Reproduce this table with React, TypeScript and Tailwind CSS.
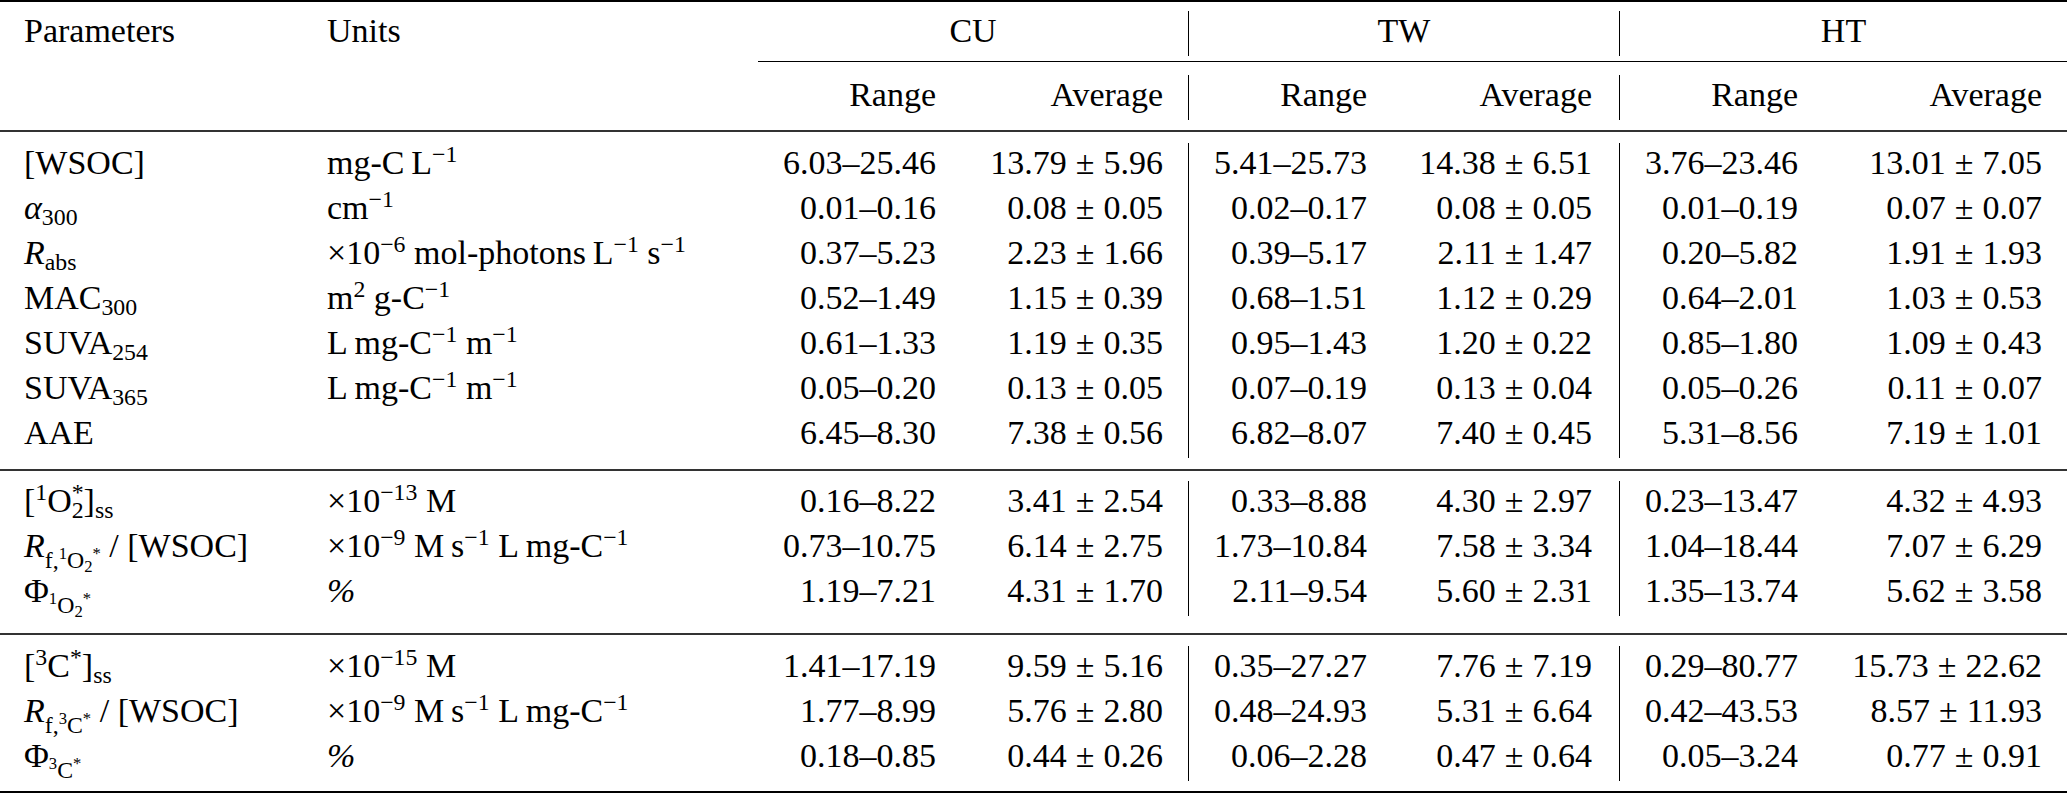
import type { ReactNode } from "react"

const grid = "grid grid-cols-[304px_454px_203px_227px_204px_227px_204px_244px]"

// cell classes for the six numeric columns (CU, TW, HT: range / average)
const numCell = [
  "h-[45px] pr-[25px] text-right",
  "h-[45px] pr-[25px] text-right",
  "h-[45px] pr-[25px] text-right border-l border-black",
  "h-[45px] pr-[27px] text-right",
  "h-[45px] pr-[25px] text-right border-l border-black",
  "h-[45px] pr-[25px] text-right",
]

function Sup({ children }: { children: ReactNode }) {
  return <sup className="text-[0.7em]">{children}</sup>
}

function Sub({ children, deep }: { children: ReactNode; deep?: boolean }) {
  return <sub className={deep ? "text-[0.7em] bottom-[-0.45em]" : "text-[0.7em]"}>{children}</sub>
}

function Avg({ v }: { v: string }) {
  const [m, s] = v.split("±")
  return (
    <>
      {m}
      <span className="mx-[9px]">±</span>
      {s}
    </>
  )
}

type Row = { p: ReactNode; u: ReactNode; v: string[] }

const perM = (
  <>
    ×10<Sup>−9</Sup> M{"\u2009"}s<Sup>−1</Sup> L{"\u2009"}mg-C<Sup>−1</Sup>
  </>
)

const sections: Row[][] = [
  [
    {
      p: "[WSOC]",
      u: (
        <>
          mg-C{"\u2009"}L<Sup>−1</Sup>
        </>
      ),
      v: ["6.03–25.46", "13.79±5.96", "5.41–25.73", "14.38±6.51", "3.76–23.46", "13.01±7.05"],
    },
    {
      p: (
        <>
          <i>α</i>
          <Sub>300</Sub>
        </>
      ),
      u: (
        <>
          cm<Sup>−1</Sup>
        </>
      ),
      v: ["0.01–0.16", "0.08±0.05", "0.02–0.17", "0.08±0.05", "0.01–0.19", "0.07±0.07"],
    },
    {
      p: (
        <>
          <i>R</i>
          <Sub>abs</Sub>
        </>
      ),
      u: (
        <>
          ×10<Sup>−6</Sup> mol-photons{"\u2009"}L<Sup>−1</Sup> s<Sup>−1</Sup>
        </>
      ),
      v: ["0.37–5.23", "2.23±1.66", "0.39–5.17", "2.11±1.47", "0.20–5.82", "1.91±1.93"],
    },
    {
      p: (
        <>
          MAC<Sub>300</Sub>
        </>
      ),
      u: (
        <>
          m<Sup>2</Sup> g-C<Sup>−1</Sup>
        </>
      ),
      v: ["0.52–1.49", "1.15±0.39", "0.68–1.51", "1.12±0.29", "0.64–2.01", "1.03±0.53"],
    },
    {
      p: (
        <>
          SUVA<Sub>254</Sub>
        </>
      ),
      u: (
        <>
          L{"\u2009"}mg-C<Sup>−1</Sup> m<Sup>−1</Sup>
        </>
      ),
      v: ["0.61–1.33", "1.19±0.35", "0.95–1.43", "1.20±0.22", "0.85–1.80", "1.09±0.43"],
    },
    {
      p: (
        <>
          SUVA<Sub>365</Sub>
        </>
      ),
      u: (
        <>
          L{"\u2009"}mg-C<Sup>−1</Sup> m<Sup>−1</Sup>
        </>
      ),
      v: ["0.05–0.20", "0.13±0.05", "0.07–0.19", "0.13±0.04", "0.05–0.26", "0.11±0.07"],
    },
    {
      p: "AAE",
      u: "",
      v: ["6.45–8.30", "7.38±0.56", "6.82–8.07", "7.40±0.45", "5.31–8.56", "7.19±1.01"],
    },
  ],
  [
    {
      p: (
        <>
          [<Sup>1</Sup>O<Sup>*</Sup>
          <sub className="ml-[-12px] text-[0.7em]">2</sub>]<Sub>ss</Sub>
        </>
      ),
      u: (
        <>
          ×10<Sup>−13</Sup> M
        </>
      ),
      v: ["0.16–8.22", "3.41±2.54", "0.33–8.88", "4.30±2.97", "0.23–13.47", "4.32±4.93"],
    },
    {
      p: (
        <>
          <i>R</i>
          <Sub deep>
            f,<Sup>1</Sup>O<Sub>2</Sub>
            <Sup>*</Sup>
          </Sub>{" "}
          / [WSOC]
        </>
      ),
      u: perM,
      v: ["0.73–10.75", "6.14±2.75", "1.73–10.84", "7.58±3.34", "1.04–18.44", "7.07±6.29"],
    },
    {
      p: (
        <>
          Φ
          <Sub deep>
            <Sup>1</Sup>O<Sub>2</Sub>
            <Sup>*</Sup>
          </Sub>
        </>
      ),
      u: <i>%</i>,
      v: ["1.19–7.21", "4.31±1.70", "2.11–9.54", "5.60±2.31", "1.35–13.74", "5.62±3.58"],
    },
  ],
  [
    {
      p: (
        <>
          [<Sup>3</Sup>C<Sup>*</Sup>]<Sub>ss</Sub>
        </>
      ),
      u: (
        <>
          ×10<Sup>−15</Sup> M
        </>
      ),
      v: ["1.41–17.19", "9.59±5.16", "0.35–27.27", "7.76±7.19", "0.29–80.77", "15.73±22.62"],
    },
    {
      p: (
        <>
          <i>R</i>
          <Sub deep>
            f,<Sup>3</Sup>C<Sup>*</Sup>
          </Sub>{" "}
          / [WSOC]
        </>
      ),
      u: perM,
      v: ["1.77–8.99", "5.76±2.80", "0.48–24.93", "5.31±6.64", "0.42–43.53", "8.57±11.93"],
    },
    {
      p: (
        <>
          Φ
          <Sub deep>
            <Sup>3</Sup>C<Sup>*</Sup>
          </Sub>
        </>
      ),
      u: <i>%</i>,
      v: ["0.18–0.85", "0.44±0.26", "0.06–2.28", "0.47±0.64", "0.05–3.24", "0.77±0.91"],
    },
  ],
]

// space above each section and below its midrule
const sectionGap = ["mt-[11px]", "mt-[10px]", "mt-[11px]"]
const ruleGap = ["mt-[11px]", "mt-[17px]", "mt-[10px]"]

function DataRow({ row }: { row: Row }) {
  return (
    <div className={grid}>
      <div className="h-[45px] pl-[24px] whitespace-nowrap">{row.p}</div>
      <div className="h-[45px] pl-[23px] whitespace-nowrap">{row.u}</div>
      {row.v.map((v, i) => (
        <div key={i} className={numCell[i] + " whitespace-nowrap"}>
          {i % 2 ? <Avg v={v} /> : v}
        </div>
      ))}
    </div>
  )
}

export default function App() {
  return (
    <div className="w-[2067px] min-h-[795px] bg-white text-black text-[34px] leading-[40px] font-['Liberation_Serif','Times_New_Roman',serif]">
      <div className="h-[2px] bg-black" />

      <div className={grid + " mt-[9px]"}>
        <div className="h-[45px] pl-[24px]">Parameters</div>
        <div className="h-[45px] pl-[23px]">Units</div>
        <div className="col-span-2 h-[45px] text-center">CU</div>
        <div className="col-span-2 h-[45px] text-center border-l border-black">TW</div>
        <div className="col-span-2 h-[45px] text-center border-l border-black">HT</div>
      </div>

      <div className={grid + " mt-[5px]"}>
        <div className="col-start-3 col-span-6 h-px bg-black" />
      </div>

      <div className={grid + " mt-[13px]"}>
        <div className="h-[45px]" />
        <div className="h-[45px]" />
        {["Range", "Average", "Range", "Average", "Range", "Average"].map((t, i) => (
          <div key={i} className={numCell[i]}>
            {t}
          </div>
        ))}
      </div>

      <div className="mt-[10px] h-[2px] bg-[#333]" />

      {sections.map((rows, s) => (
        <div key={s}>
          <div className={sectionGap[s]}>
            {rows.map((r, i) => (
              <DataRow key={i} row={r} />
            ))}
          </div>
          <div className={ruleGap[s] + (s === 2 ? " h-[2px] bg-black" : " h-[2px] bg-[#333]")} />
        </div>
      ))}
    </div>
  )
}
